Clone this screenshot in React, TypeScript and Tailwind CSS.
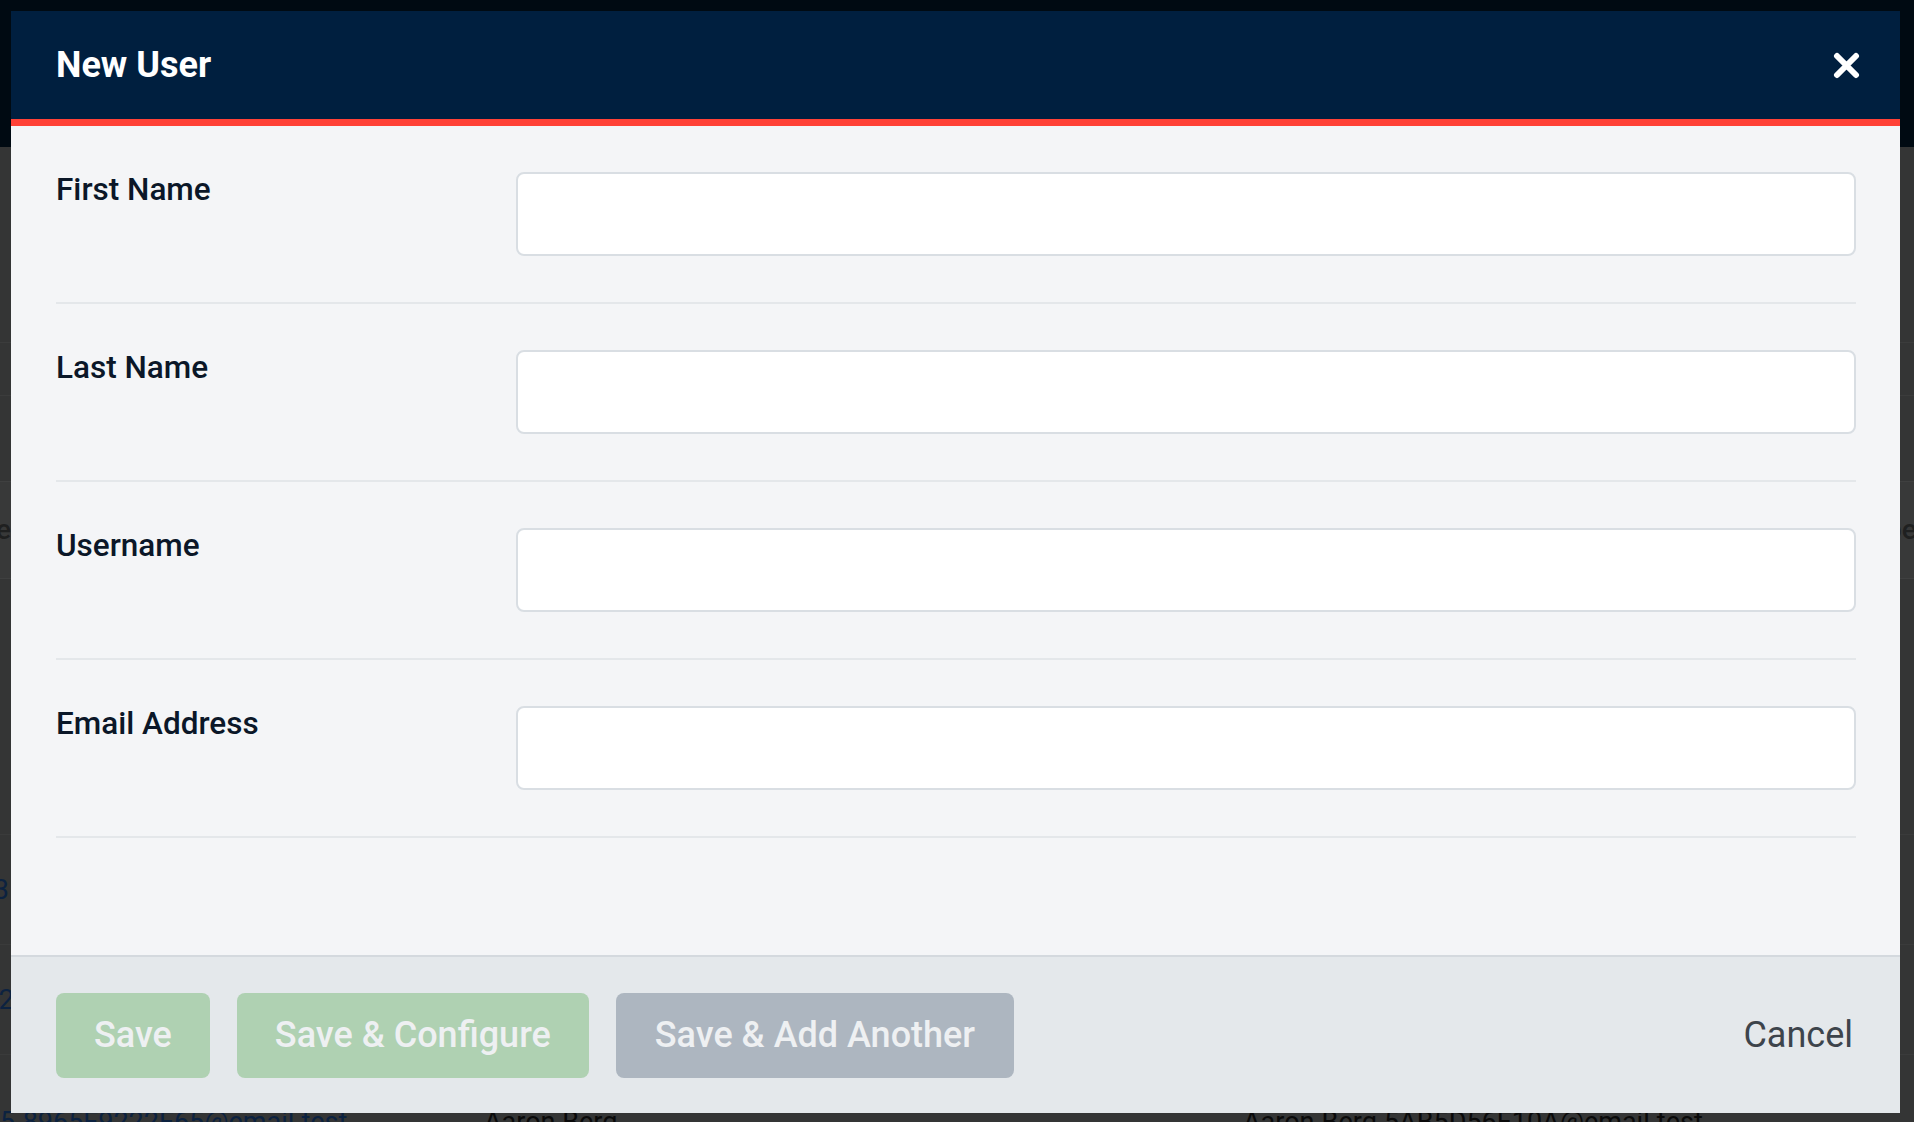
import React from "react";

function CloseIcon() {
  return (
    <svg width="27" height="27" viewBox="0 0 27 27" aria-hidden="true">
      <path d="M4 4 L23 23 M23 4 L4 23" stroke="#ffffff" strokeWidth="6" strokeLinecap="round" fill="none" />
    </svg>
  );
}

const fields = ["First Name", "Last Name", "Username", "Email Address"];

function FieldRow({ label }: { label: string }) {
  return (
    <div className="flex items-start py-[46px] border-b-2 border-[#e4e7ea]">
      <label className="w-[460px] shrink-0 text-[31.5px] font-medium leading-[36px] text-[#0b1728]">{label}</label>
      <div className="flex-1 h-[84px] bg-white border-2 border-[#d9dee3] rounded-[8px]" />
    </div>
  );
}

export default function App() {
  return (
    <div className="relative w-[1914px] h-[1122px] overflow-hidden bg-[#343535] font-['Roboto',sans-serif]">
      {/* dimmed page behind the dialog */}
      <div className="absolute inset-0 flex flex-col">
        <div className="h-[147px] shrink-0 bg-[#000a12]" />
        <div className="h-[196px] shrink-0 border-b border-[#3b3c3c]" />
        <div className="h-[53px] shrink-0 border-b border-[#3b3c3c]" />
        <div className="h-[85px] shrink-0" />
        <div className="h-[98px] shrink-0 bg-[#383939] border-y border-[#3f4040] flex items-center text-[28px] font-medium text-[#1f2020]">
          <div className="w-[11px] flex justify-end whitespace-nowrap">Name</div>
          <div className="ml-auto -mr-[10px] whitespace-nowrap">Label</div>
        </div>
        <div className="h-[256px] shrink-0 border-b border-[#3a3b3b]" />
        <div className="h-[110px] shrink-0 flex items-center text-[28px] text-[#0c2240] border-b border-[#3a3b3b]">
          <div className="w-[9px] flex justify-end whitespace-nowrap">4D33</div>
        </div>
        <div className="h-[110px] shrink-0 flex items-center text-[28px] text-[#0c2240] border-b border-[#3a3b3b]">
          <div className="w-[22px] flex justify-end whitespace-nowrap">7A2-</div>
        </div>
        <div className="flex pt-[50px] text-[27px] leading-[34px] whitespace-nowrap">
          <div className="w-[484px] shrink-0 text-[#0c2240]">5-8965F9222F65@email.test</div>
          <div className="w-[759px] shrink-0 text-[#0a0a0a]">Aaron Berg</div>
          <div className="text-[#0a0a0a]">Aaron.Berg.5AB5D56F10A@email.test</div>
        </div>
      </div>

      {/* dialog */}
      <div className="absolute left-[11px] top-[11px] w-[1889px] h-[1102px] flex flex-col bg-[#f4f5f7]">
        <div className="h-[115px] shrink-0 bg-[#001f3f] border-b-[7px] border-[#ff4136] flex items-center justify-between pl-[45px] pr-[40px]">
          <h1 className="text-[36px] font-bold leading-none text-white">New User</h1>
          <button className="flex items-center justify-center">
            <CloseIcon />
          </button>
        </div>

        <div className="flex-1 pl-[45px] pr-[44px] flex flex-col">
          {fields.map((f) => (
            <FieldRow key={f} label={f} />
          ))}
        </div>

        <div className="h-[158px] shrink-0 bg-[#e4e8eb] border-t-2 border-[#d4d9de] flex items-center pl-[45px] pr-[47px] gap-[27px]">
          <button className="h-[85px] px-[38px] rounded-[8px] bg-[#afd1b2] text-[36px] font-medium text-[#eef0f2]">Save</button>
          <button className="h-[85px] px-[38px] rounded-[8px] bg-[#afd1b2] text-[36px] font-medium text-[#eef0f2]">Save &amp; Configure</button>
          <button className="h-[85px] px-[39px] rounded-[8px] bg-[#adb6c0] text-[36px] font-medium text-[#eef0f2]">Save &amp; Add Another</button>
          <button className="ml-auto text-[36px] text-[#3d444b]">Cancel</button>
        </div>
      </div>
    </div>
  );
}
